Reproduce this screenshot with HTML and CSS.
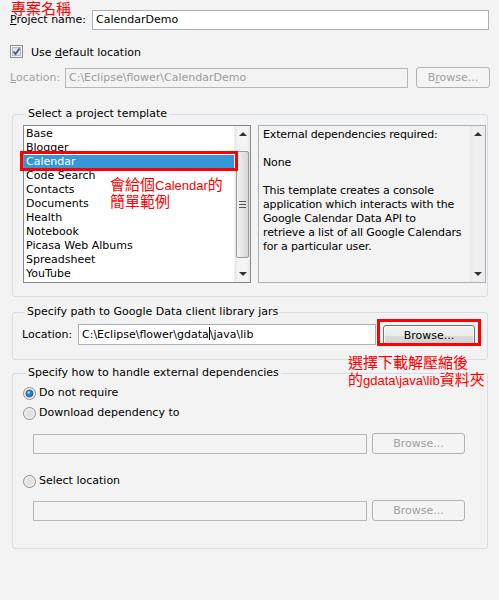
FILE: index.html
```html
<!DOCTYPE html>
<html lang="zh-Hant">
<head>
    <meta charset="UTF-8">
    <title>New Google Data Project</title>
    <link rel="stylesheet" href="styles.css">
</head>
<body>
    <div class="page">
        <div class="row row-name">
            <span class="label-name"><u>P</u>roject name:</span>
            <div class="input">CalendarDemo</div>
        </div>

        <div class="row row-check">
            <svg class="checkbox" width="13" height="13" viewBox="0 0 13 13">
                <rect x="0.5" y="0.5" width="12" height="12" fill="#f4f4f4" stroke="#8e8f8f"/>
                <rect x="2.5" y="2.5" width="8" height="8" fill="#dfe3e8" stroke="#b8bcc2"/>
                <path d="M3.5 6.5 L5.5 9 L9.5 3.5" fill="none" stroke="#4a5c86" stroke-width="1.8"/>
            </svg>
            <span>Use <u>d</u>efault location</span>
        </div>

        <div class="row row-location disabled">
            <span class="label-loc"><u>L</u>ocation:</span>
            <div class="input input-disabled">C:\Eclipse\flower\CalendarDemo</div>
            <div class="button button-disabled">B<u>r</u>owse...</div>
        </div>

        <fieldset class="group group-template">
            <legend>Select a project template</legend>
            <div class="template-body">
                <div class="listbox">
                    <ul class="items">
                        <li>Base</li>
                        <li>Blogger</li>
                        <li class="selected">Calendar</li>
                        <li>Code Search</li>
                        <li>Contacts</li>
                        <li>Documents</li>
                        <li>Health</li>
                        <li>Notebook</li>
                        <li>Picasa Web Albums</li>
                        <li>Spreadsheet</li>
                        <li>YouTube</li>
                    </ul>
                    <div class="scrollbar">
                        <span class="arrow arrow-up"></span>
                        <div class="thumb"><span class="grip"></span></div>
                        <span class="arrow arrow-down"></span>
                    </div>
                </div>
                <div class="description">
                    <div class="desc-text">
                        <p>External dependencies required:</p>
                        <p>None</p>
                        <p>This template creates a console<br>application which interacts with the<br>Google Calendar Data API to<br>retrieve a list of all Google Calendars<br>for a particular user.</p>
                    </div>
                    <div class="scrollbar scrollbar-empty">
                        <span class="arrow arrow-up"></span>
                        <span class="arrow arrow-down"></span>
                    </div>
                </div>
            </div>
        </fieldset>

        <fieldset class="group group-path">
            <legend>Specify path to Google Data client library jars</legend>
            <div class="path-row">
                <span class="label-path">Location:</span>
                <div class="input input-path">C:\Eclipse\flower\gdata<span class="caret"></span>\java\lib</div>
                <div class="button">Browse...</div>
            </div>
        </fieldset>

        <fieldset class="group group-deps">
            <legend>Specify how to handle external dependencies</legend>
            <div class="radio-row radio-first">
                <svg class="radio" width="13" height="13" viewBox="0 0 13 13">
                    <circle cx="6.5" cy="6.5" r="6" fill="#f0f0f0" stroke="#8e8f8f"/>
                    <circle cx="6.5" cy="6.5" r="3.6" fill="#2a7fc4" stroke="#1b5b94" stroke-width="0.8"/>
                    <circle cx="5.7" cy="5.6" r="1.3" fill="#9fd3f7"/>
                </svg>
                <span>Do not require</span>
            </div>
            <div class="radio-row">
                <svg class="radio" width="13" height="13" viewBox="0 0 13 13">
                    <circle cx="6.5" cy="6.5" r="6" fill="#f0f0f0" stroke="#8e8f8f"/>
                    <circle cx="6.5" cy="6.5" r="4" fill="#e2e2e2"/>
                </svg>
                <span>Download dependency to</span>
            </div>
            <div class="dep-row dep-download">
                <div class="input input-disabled input-dep"></div>
                <div class="button button-disabled button-dep">Browse...</div>
            </div>
            <div class="radio-row radio-select">
                <svg class="radio" width="13" height="13" viewBox="0 0 13 13">
                    <circle cx="6.5" cy="6.5" r="6" fill="#f0f0f0" stroke="#8e8f8f"/>
                    <circle cx="6.5" cy="6.5" r="4" fill="#e2e2e2"/>
                </svg>
                <span>Select location</span>
            </div>
            <div class="dep-row dep-select">
                <div class="input input-disabled input-dep"></div>
                <div class="button button-disabled button-dep">Browse...</div>
            </div>
        </fieldset>

        <!-- red notes drawn over the dialog -->
        <div class="note note-title">專案名稱</div>
        <div class="mark mark-calendar"></div>
        <div class="note note-calendar">會給個<span class="latin">Calendar</span>的<br>簡單範例</div>
        <div class="mark mark-browse"></div>
        <div class="note note-browse">選擇下載解壓縮後<br>的<span class="latin">gdata\java\lib</span>資料夾</div>
    </div>
</body>
</html>
```

FILE: styles.css
```css
body {
    margin: 0;
    background-color: #f3f3f3;
    font-family: "DejaVu Sans", sans-serif;
    font-size: 11px;
    line-height: 14px;
    color: #000;
}

u {
    text-decoration: underline;
    text-underline-offset: 1px;
}

.page {
    position: relative;
    width: 499px;
    height: 600px;
    padding: 0 10px;
    box-sizing: border-box;
}

.row {
    display: flex;
    align-items: center;
}

.row-name {
    padding-top: 10px;
}

.label-name {
    width: 82px;
    flex: none;
}

.input {
    height: 20px;
    box-sizing: border-box;
    border: 1px solid #a9b0b8;
    background-color: #fff;
    padding: 2px 3px 0;
    white-space: nowrap;
    overflow: hidden;
}

.row-name .input {
    flex: 1;
}

.row-check {
    margin-top: 15px;
    height: 13px;
}

.row-check span {
    margin-top: 2px;
}

.checkbox {
    flex: none;
    margin-right: 8px;
}

.row-location {
    margin-top: 9px;
    height: 21px;
}

.disabled {
    color: #a3a3a3;
}

.label-loc {
    width: 55px;
    flex: none;
}

.input-disabled {
    background-color: #f3f3f3;
    border-color: #b4b8bd;
    color: #9c9c9c;
}

.row-location .input {
    width: 343px;
    flex: none;
    margin-top: 1px;
}

.button {
    height: 21px;
    box-sizing: border-box;
    border: 1px solid #707070;
    border-radius: 3px;
    background: linear-gradient(180deg, #f2f2f2 0%, #ebebeb 50%, #dddddd 51%, #cfcfcf 100%);
    box-shadow: inset 0 0 0 1px rgba(255, 255, 255, 0.7);
    text-align: center;
    line-height: 19px;
    flex: none;
}

.button-disabled {
    background: #f4f4f4;
    border-color: #adb2b5;
    color: #a0a0a0;
    box-shadow: none;
}

.row-location .button {
    width: 74px;
    margin-left: 8px;
}

/* groups */

.group {
    border: 1px solid #d5dfe5;
    border-radius: 3px;
    margin: 0 1px 0 2px;
    min-width: 0;
}

.group legend {
    padding: 0 2px;
    margin-left: 3px;
    line-height: 14px;
}

.group-template {
    margin-top: 19px;
    padding: 4px 1px 13px 10px;
}

.template-body {
    display: flex;
    gap: 7px;
}

.listbox {
    width: 228px;
    height: 158px;
    box-sizing: border-box;
    border: 1px solid #828790;
    background-color: #fff;
    display: flex;
    flex: none;
}

.items {
    list-style: none;
    margin: 0;
    padding: 1px 0 0;
    flex: 1;
}

.items li {
    height: 14px;
    padding-left: 2px;
    white-space: nowrap;
}

.items .selected {
    background-color: #3796d8;
    color: #fff;
}

.scrollbar {
    width: 15px;
    flex: none;
    display: flex;
    flex-direction: column;
    align-items: center;
    background: linear-gradient(90deg, #e8e8e8 0%, #f4f4f4 20%, #f4f4f4 80%, #e8e8e8 100%);
    border-left: 1px solid #f0f0f0;
}

.arrow {
    width: 0;
    height: 0;
    border-left: 4px solid transparent;
    border-right: 4px solid transparent;
    margin: 6px 0;
}

.arrow-up {
    border-bottom: 4px solid #333;
}

.arrow-down {
    border-top: 4px solid #333;
    margin-top: auto;
}

.thumb {
    width: 13px;
    height: 107px;
    box-sizing: border-box;
    margin-top: 9px;
    border: 1px solid #9a9a9a;
    border-radius: 2px;
    background: linear-gradient(90deg, #f2f2f2 0%, #e6e6e6 50%, #d6d6d6 100%);
    display: flex;
    align-items: center;
    justify-content: center;
}

.grip {
    width: 7px;
    height: 5px;
    border-top: 1px solid #555;
    border-bottom: 1px solid #555;
    background: linear-gradient(180deg, transparent 2px, #555 2px, #555 3px, transparent 3px);
}

.description {
    flex: 1;
    height: 158px;
    box-sizing: border-box;
    border: 1px solid #a9b0b8;
    display: flex;
}

.desc-text {
    flex: 1;
    padding: 2px 0 0 4px;
    letter-spacing: -0.15px;
    white-space: nowrap;
    overflow: hidden;
}

.desc-text p {
    margin: 0 0 14px;
}

.scrollbar-empty {
    background: linear-gradient(90deg, #e9e9e9 0%, #f0f0f0 30%, #f0f0f0 70%, #e9e9e9 100%);
}

.group-path {
    margin-top: 8px;
    padding: 5px 12px 14px 9px;
}

.path-row {
    display: flex;
    align-items: center;
    height: 21px;
}

.label-path {
    width: 56px;
    flex: none;
}

.input-path {
    width: 298px;
    height: 21px;
    flex: none;
}

.caret {
    display: inline-block;
    width: 1px;
    height: 13px;
    background-color: #000;
    vertical-align: -2px;
}

.path-row .button {
    width: 92px;
    margin-left: 7px;
    margin-top: 1px;
}

.group-deps {
    margin-top: 6px;
    padding: 5px 12px 27px 10px;
}

.radio-row {
    display: flex;
    align-items: center;
    height: 16px;
    margin-top: 4px;
}

.radio-first {
    margin-top: 0;
}

.radio {
    flex: none;
    margin-right: 3px;
}

.radio-select {
    margin-top: 19px;
}

.dep-row {
    display: flex;
    align-items: center;
    padding-left: 10px;
    height: 21px;
}

.dep-download {
    margin-top: 12px;
}

.dep-select {
    margin-top: 11px;
}

.input-dep {
    width: 334px;
    flex: none;
}

.button-dep {
    width: 93px;
    margin-left: 5px;
}

/* red notes */

.note {
    position: absolute;
    color: #ff0000;
    font-family: "Noto Sans CJK TC", sans-serif;
    font-size: 15px;
    line-height: 15px;
    white-space: nowrap;
}

.note .latin {
    font-family: "Liberation Sans", sans-serif;
    font-size: 13px;
}

.note-title {
    left: 11px;
    top: 0;
}

.note-calendar {
    left: 110px;
    top: 176px;
}

.note-browse {
    left: 348px;
    top: 353px;
    line-height: 17px;
}

.mark {
    position: absolute;
    border: 3px solid #ff0000;
    box-sizing: border-box;
}

.mark-calendar {
    left: 20px;
    top: 151px;
    width: 218px;
    height: 20px;
}

.mark-browse {
    left: 377px;
    top: 319px;
    width: 104px;
    height: 27px;
}
```
